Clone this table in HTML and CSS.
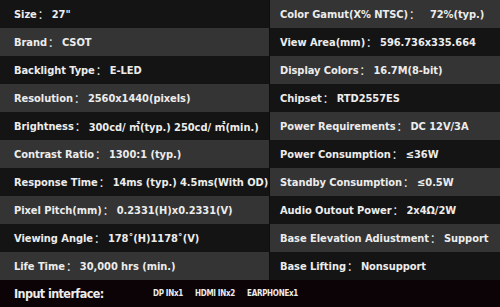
FILE: index.html
```html
<!DOCTYPE html>
<html>
<head>
<meta charset="utf-8">
<link rel="stylesheet" href="styles.css">
</head>
<body>
<div class="sheet">
  <div class="grid">
    <div class="col left">
      <div class="row dark">Size<span class="c">：</span>27"</div>
      <div class="row light">Brand<span class="c">：</span>CSOT</div>
      <div class="row dark">Backlight Type<span class="c">：</span>E-LED</div>
      <div class="row light">Resolution<span class="c">：</span>2560x1440(pixels)</div>
      <div class="row dark">Brightness<span class="c">：</span>300cd/ ㎡(typ.) 250cd/ ㎡(min.)</div>
      <div class="row light">Contrast Ratio<span class="c">：</span>1300:1 (typ.)</div>
      <div class="row dark">Response Time<span class="c">：</span>14ms (typ.) 4.5ms(With OD)</div>
      <div class="row light">Pixel Pitch(mm)<span class="c">：</span>0.2331(H)x0.2331(V)</div>
      <div class="row dark">Viewing Angle<span class="c">：</span>178˚(H)1178˚(V)</div>
      <div class="row light">Life Time<span class="c">：</span>30,000 hrs (min.)</div>
    </div>
    <div class="col right">
      <div class="row light">Color Gamut(X% NTSC)<span class="c wide">：</span>72%(typ.)</div>
      <div class="row dark">View Area(mm)<span class="c">：</span>596.736x335.664</div>
      <div class="row light">Display Colors<span class="c">：</span>16.7M(8-bit)</div>
      <div class="row dark">Chipset<span class="c">：</span>RTD2557ES</div>
      <div class="row light">Power Requirements<span class="c">：</span>DC 12V/3A</div>
      <div class="row dark">Power Consumption<span class="c">：</span>≤36W</div>
      <div class="row light">Standby Consumption<span class="c">：</span>≤0.5W</div>
      <div class="row dark">Audio Outout Power<span class="c">：</span>2x4Ω/2W</div>
      <div class="row light">Base Elevation Adiustment<span class="c">：</span>Support</div>
      <div class="row dark">Base Lifting<span class="c">：</span>Nonsupport</div>
    </div>
  </div>
  <div class="footer">
    <span class="footer-title">Input interface:</span>
    <span class="port">DP INx1</span>
    <span class="port">HDMI INx2</span>
    <span class="port">EARPHONEx1</span>
  </div>
</div>
</body>
</html>
```

FILE: styles.css
```css
html, body {
  margin: 0;
  padding: 0;
  background: #0b0306;
}
.sheet {
  width: 500px;
  height: 307px;
  display: flex;
  flex-direction: column;
  font-family: "DejaVu Sans Condensed", "Noto Sans CJK SC", sans-serif;
  font-weight: bold;
  color: #ececec;
}
.grid {
  display: grid;
  grid-template-columns: 269px 1fr;
  column-gap: 1px;
  background: #0e0e0e;
}
.col {
  display: flex;
  flex-direction: column;
}
.row {
  height: 28px;
  display: flex;
  align-items: center;
  font-size: 11px;
  letter-spacing: -0.05px;
  white-space: pre;
  overflow: hidden;
}
.c {
  font-family: "Noto Sans CJK SC", sans-serif;
  font-weight: normal;
  margin-left: 1px;
  margin-right: 3px;
}
.c.wide { margin-right: 10px; }
.left .row { padding-left: 14px; }
.right .row { padding-left: 10px; }
.dark { background: #141414; }
.light { background: #343434; }
.footer {
  flex: 1;
  display: flex;
  align-items: center;
  padding-left: 14px;
  background: #0b0306;
}
.footer-title {
  font-size: 12.5px;
  letter-spacing: -0.6px;
  width: 139px;
}
.port {
  font-size: 8px;
  letter-spacing: -0.3px;
  margin-right: 12px;
}
```
